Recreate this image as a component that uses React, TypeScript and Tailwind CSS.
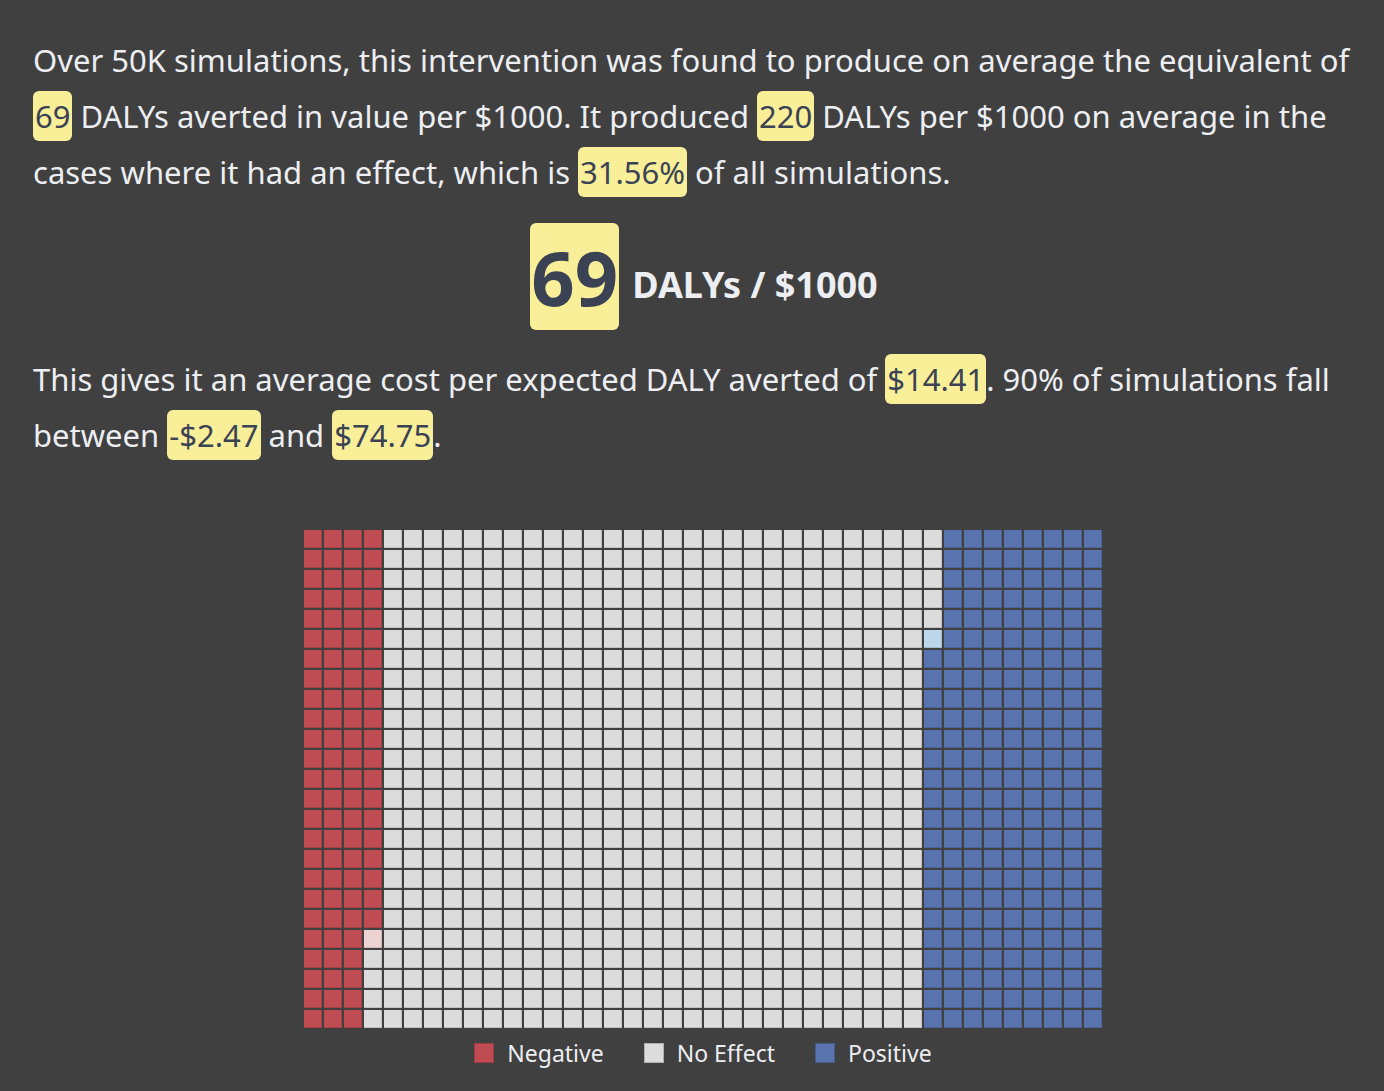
import React from 'react';

const COLS = 40;
const ROWS = 25;
const NEG = 95;
const POS = 219;

const Hl = ({ children }: { children: React.ReactNode }) => (
  <span className="inline-block bg-[#f8ef98] text-[#3a4254] rounded-[6px] px-[2px] leading-[50px]">
    {children}
  </span>
);

const cellColor = (i: number) => {
  if (i < NEG) return 'bg-[#bf4b53]';
  if (i === NEG) return 'bg-[#ecd2d3]';
  if (i > COLS * ROWS - 1 - POS) return 'bg-[#5873ad]';
  if (i === COLS * ROWS - 1 - POS) return 'bg-[#bcd6ea]';
  return 'bg-[#dcdcdc]';
};

const Waffle = () => {
  const cells = [];
  // column-major order: fill down each column, then move right
  for (let r = 0; r < ROWS; r++) {
    for (let c = 0; c < COLS; c++) {
      const i = c * ROWS + r;
      cells.push(
        <div
          key={i}
          className={`w-[18px] h-[18px] shadow-[inset_-1px_-1px_0_rgba(0,0,0,0.12)] ${cellColor(i)}`}
        />
      );
    }
  }
  return <div className="grid grid-cols-[repeat(40,18px)] gap-[2px]">{cells}</div>;
};

const LegendItem = ({ color, label }: { color: string; label: string }) => (
  <div className="flex items-center gap-[13px]">
    <div className={`w-[20px] h-[20px] border border-black/20 ${color}`} />
    <span>{label}</span>
  </div>
);

export default function App() {
  return (
    <div
      className="min-h-screen bg-[#404040] text-[#eceef2] pl-[33px] pr-[20px] pt-[32px]"
      style={{ fontFamily: '"Noto Sans", "Open Sans", sans-serif' }}
    >
      <p className="text-[31px] leading-[56px]">
        Over 50K simulations, this intervention was found to produce on average the equivalent of{' '}
        <Hl>69</Hl> DALYs averted in value per $1000. It produced <Hl>220</Hl> DALYs per $1000 on
        average in the cases where it had an effect, which is <Hl>31.56%</Hl> of all simulations.
      </p>

      <div className="flex items-end justify-center gap-[13px] mt-[23px] mb-[21px] pl-[11px]">
        <div className="bg-[#f8ef98] text-[#3a4254] rounded-[6px] w-[89px] h-[107px] flex items-center justify-center text-[76px] font-bold">
          69
        </div>
        <div className="text-[36px] font-bold mb-[18px]">DALYs / $1000</div>
      </div>

      <p className="text-[31px] leading-[56px]">
        This gives it an average cost per expected DALY averted of <Hl>$14.41</Hl>. 90% of simulations
        fall between <Hl>-$2.47</Hl> and <Hl>$74.75</Hl>.
      </p>

      <div className="flex flex-col items-center mt-[67px] pl-[9px]">
        <Waffle />
        <div className="flex gap-[40px] text-[23px] mt-[8px]">
          <LegendItem color="bg-[#bf4b53]" label="Negative" />
          <LegendItem color="bg-[#dcdcdc]" label="No Effect" />
          <LegendItem color="bg-[#5873ad]" label="Positive" />
        </div>
      </div>
    </div>
  );
}
